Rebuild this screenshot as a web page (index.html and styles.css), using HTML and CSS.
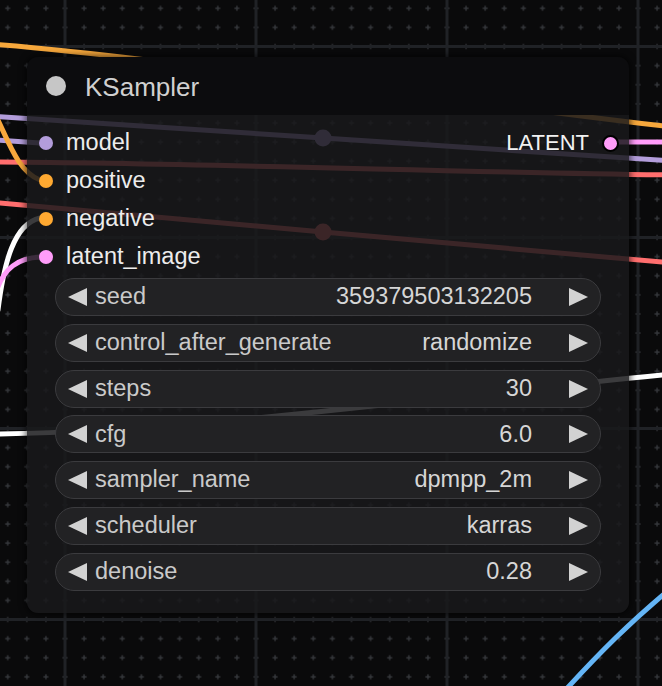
FILE: index.html
```html
<!DOCTYPE html>
<html>
<head>
<meta charset="utf-8">
<link rel="stylesheet" href="styles.css">
</head>
<body>
<div class="canvas">
  <svg class="graph" width="662" height="686" viewBox="0 0 662 686">
    <defs>
      <pattern id="dots" patternUnits="userSpaceOnUse" width="19.1" height="19.1" x="-1.85" y="-1.25">
        <rect x="7.05" y="8.9" width="5" height="1.4" fill="#35373b"/>
        <rect x="8.85" y="7.05" width="1.4" height="5" fill="#35373b"/>
      </pattern>
      <pattern id="grid" patternUnits="userSpaceOnUse" width="191" height="191" x="63.5" y="45">
        <rect x="0" y="0" width="3" height="191" fill="#202226"/>
        <rect x="0" y="0" width="191" height="3" fill="#202226"/>
      </pattern>
    </defs>
    <rect width="662" height="686" fill="#0a0a0b"/>
    <rect width="662" height="686" fill="url(#dots)"/>
    <rect width="662" height="686" fill="url(#grid)"/>
    <g fill="none" stroke-width="5" stroke-linecap="round">
      <path d="M -10 44 C 150 56, 400 95, 672 127" stroke="#f7a83c"/>
      <path d="M -10 116 L 323 138 L 672 161" stroke="#b39ddb"/>
      <path d="M -10 162 C 200 163, 450 172, 672 175" stroke="#ff6e6e"/>
      <path d="M -10 202 L 323 232 L 672 263" stroke="#ff6e6e"/>
      <path d="M -10 434 C 200 432, 450 395, 672 374" stroke="#ffffff"/>
      <path d="M -4 140 L 40 143" stroke="#b39ddb"/>
      <path d="M -4 116 C 8 140, 18 172, 40 180" stroke="#f7a83c"/>
      <path d="M -2 310 C 4 262, 14 224, 40 218" stroke="#ffffff"/>
      <path d="M -4 292 C 4 268, 18 258, 40 257" stroke="#ff9cf9"/>
      <path d="M 612 142 L 672 142" stroke="#ff9cf9"/>
      <path d="M 560 696 C 600 652, 630 622, 676 584" stroke="#64b5f6"/>
    </g>
    <circle cx="323" cy="138" r="8.5" fill="#b39ddb"/>
    <circle cx="323" cy="232" r="8.5" fill="#ff6e6e"/>
  </svg>

  <div class="node">
    <div class="title">
      <span class="title-dot"></span>
      <span class="title-text">KSampler</span>
    </div>
    <div class="body">
      <div class="slots">
        <div class="slot-row">
          <div class="slot-in"><span class="dot model"></span><span class="slot-label">model</span></div>
          <div class="slot-out"><span class="slot-label out">LATENT</span><span class="dot latent outlined"></span></div>
        </div>
        <div class="slot-row">
          <div class="slot-in"><span class="dot cond"></span><span class="slot-label">positive</span></div>
        </div>
        <div class="slot-row">
          <div class="slot-in"><span class="dot cond"></span><span class="slot-label">negative</span></div>
        </div>
        <div class="slot-row">
          <div class="slot-in"><span class="dot latent"></span><span class="slot-label">latent_image</span></div>
        </div>
      </div>
      <div class="widgets">
        <div class="widget"><span class="arrow-left"></span><span class="w-label">seed</span><span class="w-value">359379503132205</span><span class="arrow-right"></span></div>
        <div class="widget"><span class="arrow-left"></span><span class="w-label">control_after_generate</span><span class="w-value">randomize</span><span class="arrow-right"></span></div>
        <div class="widget"><span class="arrow-left"></span><span class="w-label">steps</span><span class="w-value">30</span><span class="arrow-right"></span></div>
        <div class="widget"><span class="arrow-left"></span><span class="w-label">cfg</span><span class="w-value">6.0</span><span class="arrow-right"></span></div>
        <div class="widget"><span class="arrow-left"></span><span class="w-label">sampler_name</span><span class="w-value">dpmpp_2m</span><span class="arrow-right"></span></div>
        <div class="widget"><span class="arrow-left"></span><span class="w-label">scheduler</span><span class="w-value">karras</span><span class="arrow-right"></span></div>
        <div class="widget"><span class="arrow-left"></span><span class="w-label">denoise</span><span class="w-value">0.28</span><span class="arrow-right"></span></div>
      </div>
    </div>
  </div>
</div>
</body>
</html>
```

FILE: styles.css
```css
html, body {
  margin: 0;
  padding: 0;
  background: #0a0a0b;
}

.canvas {
  position: relative;
  width: 662px;
  height: 686px;
  overflow: hidden;
  font-family: "Liberation Sans", Arial, sans-serif;
}

.graph {
  position: absolute;
  left: 0;
  top: 0;
  display: block;
}

.node {
  position: absolute;
  left: 27px;
  top: 57px;
  width: 602px;
  display: flex;
  flex-direction: column;
  border-radius: 11px;
  overflow: hidden;
  box-shadow: 0 0 6px 2px rgba(0, 0, 0, 0.55);
}

.title {
  height: 58px;
  background: #0c0c0e;
  display: flex;
  align-items: center;
  padding-left: 19px;
  gap: 19px;
}

.title-dot {
  width: 20px;
  height: 20px;
  border-radius: 50%;
  background: #c6c6c6;
}

.title-text {
  color: #d0d0d0;
  font-size: 26px;
  line-height: 1;
  margin-top: 2px;
}

.body {
  background: rgba(25, 25, 27, 0.85);
  padding: 9px 0 22px;
  display: flex;
  flex-direction: column;
  gap: 2px;
}

.slots {
  display: flex;
  flex-direction: column;
}

.slot-row {
  height: 38px;
  display: flex;
  align-items: center;
  justify-content: space-between;
}

.slot-in {
  display: flex;
  align-items: center;
  gap: 13px;
  padding-left: 12px;
}

.slot-out {
  display: flex;
  align-items: center;
  gap: 13px;
  padding-right: 10px;
}

.dot {
  width: 14px;
  height: 14px;
  border-radius: 50%;
  box-sizing: border-box;
}

.dot.model { background: #b39ddb; }
.dot.cond { background: #ffa931; }
.dot.latent { background: #ff9cf9; }
.dot.outlined {
  width: 17px;
  height: 17px;
  border: 2px solid #000;
}

.slot-label {
  color: #ececec;
  font-size: 23.5px;
  line-height: 1;
}

.slot-label.out {
  color: #f2f2f2;
  font-size: 22px;
}

.widgets {
  display: flex;
  flex-direction: column;
  gap: 7.8px;
  padding: 0 28px;
}

.widget {
  height: 38px;
  box-sizing: border-box;
  border: 1.5px solid #3b3b3e;
  border-radius: 19px;
  background: #222224;
  display: flex;
  align-items: center;
  padding: 0 12px;
  font-size: 23.5px;
}

.arrow-left {
  width: 0;
  height: 0;
  border-top: 9px solid transparent;
  border-bottom: 9px solid transparent;
  border-right: 19px solid #d2d2d2;
}

.arrow-right {
  width: 0;
  height: 0;
  border-top: 9px solid transparent;
  border-bottom: 9px solid transparent;
  border-left: 19px solid #d2d2d2;
}

.w-label {
  flex: 1;
  margin-left: 8px;
  color: #cacaca;
  line-height: 1;
  white-space: nowrap;
}

.w-value {
  color: #d6d6d6;
  margin-right: 37px;
  line-height: 1;
  white-space: nowrap;
}
```
